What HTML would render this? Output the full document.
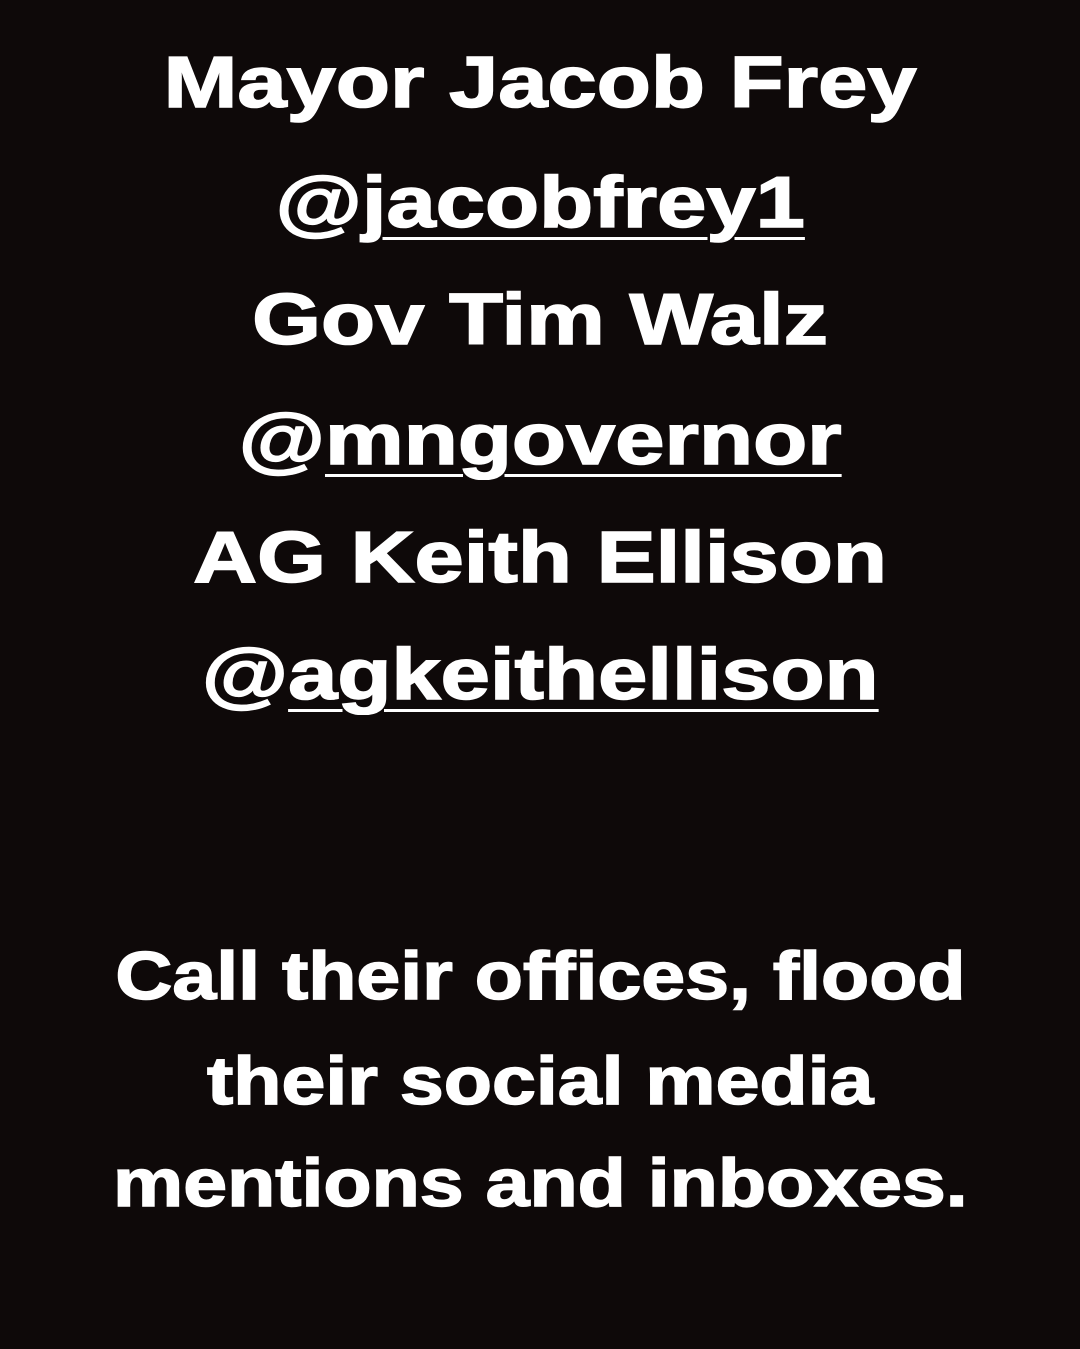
<!DOCTYPE html>
<html><head><meta charset="utf-8"><style>
html,body{margin:0;padding:0;}
body{width:1080px;height:1349px;background:#0e0909;overflow:hidden;position:relative;font-family:"Liberation Sans",Arial,sans-serif;font-weight:bold;color:#fff;-webkit-text-stroke:1.5px #fff;}
.t{position:absolute;left:0;width:1080px;text-align:center;font-size:72px;line-height:118px;}
.t span.s{display:inline-block;transform:scaleX(1.23);transform-origin:center;}
.b{position:absolute;left:0;width:1080px;text-align:center;font-size:68px;line-height:103px;}
.b span.s{display:inline-block;transform:scaleX(1.16);transform-origin:center;}
u{text-decoration:underline;text-decoration-thickness:3px;text-underline-offset:10px;}
</style></head><body>
<div class="t" style="top:24px"><span class="s">Mayor Jacob Frey</span></div>
<div class="t" style="top:144px"><span class="s">@<u>jacobfrey1</u></span></div>
<div class="t" style="top:261px"><span class="s">Gov Tim Walz</span></div>
<div class="t" style="top:381px"><span class="s">@<u>mngovernor</u></span></div>
<div class="t" style="top:499px"><span class="s">AG Keith Ellison</span></div>
<div class="t" style="top:616px"><span class="s">@<u>agkeithellison</u></span></div>
<div class="b" style="top:925px"><span class="s">Call their offices, flood</span></div>
<div class="b" style="top:1030px"><span class="s">their social media</span></div>
<div class="b" style="top:1132px"><span class="s">mentions and inboxes.</span></div>
</body></html>
